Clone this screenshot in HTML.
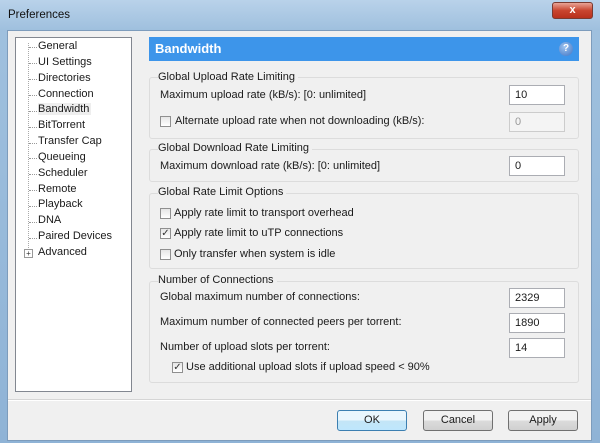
<!DOCTYPE html>
<html><head><style>
body{margin:0;width:600px;height:443px;overflow:hidden;background:#a9c8e4;font-family:"Liberation Sans",sans-serif;font-size:11px;color:#1a1a1a}
.a{position:absolute}
.title{left:8px;top:9px;font-size:11.5px;color:#111}
.frame{left:0;top:0;width:600px;height:443px;background:linear-gradient(#b9d2ea,#9fc0de 30px,#8fb3d6)}
.content{left:7px;top:30px;width:585px;height:411px;background:#f0f0f0;border:1px solid #7d9cbc;box-sizing:border-box}
.tree{left:15px;top:37px;width:117px;height:355px;background:#fff;border:1px solid #828790;box-sizing:border-box}
.ti{position:absolute;left:38px;font-size:11px}
.dot{position:absolute;left:29px;width:8px;border-top:1px dotted #999}
.hdr{left:149px;top:37px;width:430px;height:24px;background:#3d95ea;color:#fff;font-weight:bold;font-size:13px;line-height:24px;padding-left:6px;box-sizing:border-box}
.grp{position:absolute;left:149px;width:430px;border:1px solid #dcdcdc;border-radius:3px;box-sizing:border-box}
.gt{position:absolute;left:158px;background:#f0f0f0;padding-right:3px}
.inp{position:absolute;left:509px;width:56px;height:20px;background:#fff;border:1px solid #abadb3;box-sizing:border-box;padding:3px 5px;font-size:11px}
.cb{position:absolute;width:11px;height:11px;border:1px solid #8f8f8f;background:linear-gradient(#e6e6e6,#fff);box-sizing:border-box;font-size:10px;line-height:9px;text-align:center;color:#333}
.btn{position:absolute;top:410px;width:70px;height:21px;border:1px solid #707070;border-radius:3px;background:linear-gradient(#f2f2f2 50%,#dcdcdc 50%,#d0d0d0);box-sizing:border-box;text-align:center;line-height:19px}
</style></head><body>
<div class="a frame"></div>
<div class="a title">Preferences</div>
<div class="a" style="left:552px;top:2px;width:41px;height:17px;border-radius:3px;background:linear-gradient(#e8a496,#c9452f 50%,#b8301c);border:1px solid #7a3a30;box-sizing:border-box;color:#fff;font-weight:bold;text-align:center;line-height:14px;font-size:11px">x</div>
<div class="a content"></div>
<div class="a tree"></div>
<div class="a" style="left:28px;top:43px;height:205px;border-left:1px dotted #aaa"></div>
<div class="dot" style="top:47px"></div><div class="ti" style="top:40px">General</div>
<div class="dot" style="top:63px"></div><div class="ti" style="top:56px">UI Settings</div>
<div class="dot" style="top:79px"></div><div class="ti" style="top:72px">Directories</div>
<div class="dot" style="top:95px"></div><div class="ti" style="top:88px">Connection</div>
<div class="dot" style="top:111px"></div><div class="ti" style="top:103px;background:#eee;padding-right:2px">Bandwidth</div>
<div class="dot" style="top:127px"></div><div class="ti" style="top:119px">BitTorrent</div>
<div class="dot" style="top:143px"></div><div class="ti" style="top:135px">Transfer Cap</div>
<div class="dot" style="top:158px"></div><div class="ti" style="top:151px">Queueing</div>
<div class="dot" style="top:174px"></div><div class="ti" style="top:167px">Scheduler</div>
<div class="dot" style="top:190px"></div><div class="ti" style="top:183px">Remote</div>
<div class="dot" style="top:206px"></div><div class="ti" style="top:198px">Playback</div>
<div class="dot" style="top:222px"></div><div class="ti" style="top:214px">DNA</div>
<div class="dot" style="top:238px"></div><div class="ti" style="top:230px">Paired Devices</div>
<div class="a" style="left:24px;top:249px;width:9px;height:9px;border:1px solid #999;background:#fff;box-sizing:border-box;font-size:8px;line-height:7px;text-align:center;color:#333">+</div>
<div class="ti" style="top:246px">Advanced</div>
<div class="a hdr">Bandwidth</div>
<div class="a" style="left:559px;top:42px;width:14px;height:14px;border-radius:50%;background:radial-gradient(circle at 40% 35%,#9cc3f0,#3f74c4);color:#fff;font-size:10px;font-weight:bold;text-align:center;line-height:14px">?</div>

<div class="grp" style="top:77px;height:62px"></div>
<div class="gt" style="top:71px">Global Upload Rate Limiting</div>
<div class="a" style="left:160px;top:89px">Maximum upload rate (kB/s): [0: unlimited]</div>
<div class="inp" style="top:85px">10</div>
<div class="cb" style="left:160px;top:116px"></div>
<div class="a" style="left:175px;top:115px">Alternate upload rate when not downloading (kB/s):</div>
<div class="inp" style="top:112px;background:#f4f4f4;color:#999;border-color:#ccc">0</div>

<div class="grp" style="top:149px;height:33px"></div>
<div class="gt" style="top:142px">Global Download Rate Limiting</div>
<div class="a" style="left:160px;top:160px">Maximum download rate (kB/s): [0: unlimited]</div>
<div class="inp" style="top:156px">0</div>

<div class="grp" style="top:193px;height:76px"></div>
<div class="gt" style="top:186px">Global Rate Limit Options</div>
<div class="cb" style="left:160px;top:208px"></div><div class="a" style="left:174px;top:207px">Apply rate limit to transport overhead</div>
<div class="cb" style="left:160px;top:228px">✓</div><div class="a" style="left:174px;top:227px">Apply rate limit to uTP connections</div>
<div class="cb" style="left:160px;top:249px"></div><div class="a" style="left:174px;top:248px">Only transfer when system is idle</div>

<div class="grp" style="top:281px;height:102px"></div>
<div class="gt" style="top:274px">Number of Connections</div>
<div class="a" style="left:160px;top:291px">Global maximum number of connections:</div>
<div class="inp" style="top:288px">2329</div>
<div class="a" style="left:160px;top:316px">Maximum number of connected peers per torrent:</div>
<div class="inp" style="top:313px">1890</div>
<div class="a" style="left:160px;top:341px">Number of upload slots per torrent:</div>
<div class="inp" style="top:338px">14</div>
<div class="cb" style="left:172px;top:362px">✓</div><div class="a" style="left:186px;top:361px">Use additional upload slots if upload speed &lt; 90%</div>

<div class="a" style="left:8px;top:399px;width:583px;border-top:1px solid #d5d5d5;border-bottom:1px solid #fff"></div>
<div class="btn" style="left:337px;border-color:#3c7fb1;background:linear-gradient(#eaf6fd 50%,#c4e5f6 50%,#bee6fd)">OK</div>
<div class="btn" style="left:423px">Cancel</div>
<div class="btn" style="left:508px">Apply</div>
</body></html>
